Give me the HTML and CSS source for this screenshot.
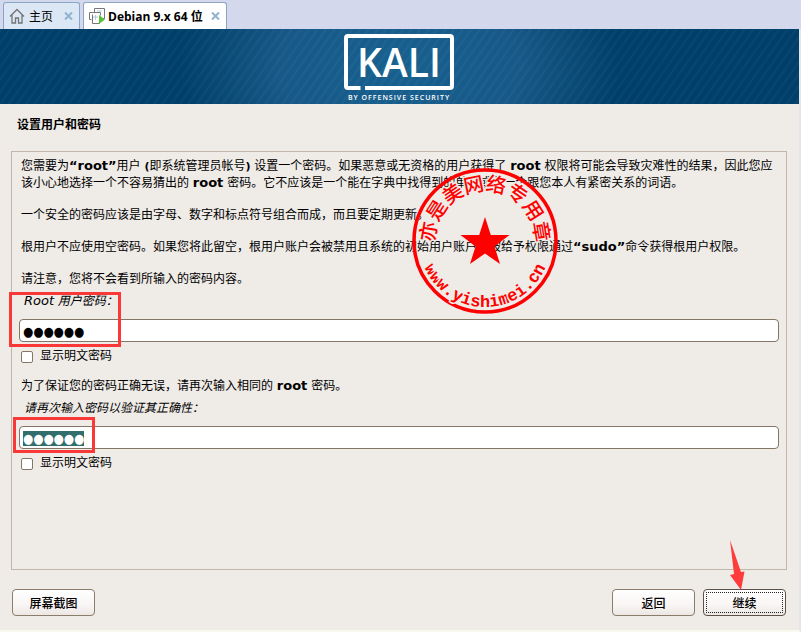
FILE: index.html
```html
<!DOCTYPE html>
<html lang="zh-CN">
<head>
<meta charset="utf-8">
<title>Debian 9.x 64 位</title>
<link rel="stylesheet" href="styles.css">
</head>
<body>
<nav class="tabs">
  <div class="tab">
    <svg class="tab-icon" width="16" height="16" viewBox="0 0 16 16" fill="none" stroke="#737373" stroke-width="1.3"><path d="M1 8.500 8 1.500l7 7M3 7v8h3.500v-5h3v5H13V7"/></svg>
    <a href="#home">主页</a>
    <button class="close" aria-label="关闭主页"><svg width="9" height="8" viewBox="0 0 9 8"><path d="M1 .5l7 7M8 .5l-7 7" stroke="#8fb3cf" stroke-width="2"/></svg></button>
  </div>
  <div class="tab active">
    <svg class="tab-icon" width="16" height="16" viewBox="0 0 16 16" fill="none" stroke="#777"><path d="M5.500 4V.5h10v10H13M5 4.500H.5v7h2M3.500 6.500V15.500h7v-2M3.500 4.500h8v3"/><path d="M6.500 7v5M4 9h5M8 3h5" stroke="#b7cbdc"/><path d="M10 7l6 4.500-6 4.500z" fill="#5bbd3c" stroke="none"/></svg>
    <a href="#debian">Debian 9.x 64 位</a>
    <button class="close" aria-label="关闭 Debian"><svg width="9" height="8" viewBox="0 0 9 8"><path d="M1 .5l7 7M8 .5l-7 7" stroke="#8fb3cf" stroke-width="2"/></svg></button>
  </div>
</nav>
<div class="installer">
  <header class="banner">
    <svg width="114" height="70" viewBox="0 0 114 70">
      <path d="M18.500 56H6a2 2 0 0 1-2-2V6a2 2 0 0 1 2-2h102a2 2 0 0 1 2 2v48a2 2 0 0 1-2 2H23" fill="none" stroke="#fff" stroke-width="4"/>
      <text class="logo-name" x="57" y="45" text-anchor="middle">KALI</text>
      <text class="logo-sub" x="57" y="68" text-anchor="middle">BY OFFENSIVE SECURITY</text>
    </svg>
  </header>
  <h1>设置用户和密码</h1>
  <main class="panel">
    <p>您需要为<strong>“root”</strong>用户 <b class="paren">(</b>即系统管理员帐号<b class="paren">)</b> 设置一个密码。如果恶意或无资格的用户获得了 <strong>root</strong> 权限将可能会导致灾难性的结果，因此您应该小心地选择一个不容易猜出的 <strong>root</strong> 密码。它不应该是一个能在字典中找得到的单词或是一个跟您本人有紧密关系的词语。</p>
    <p>一个安全的密码应该是由字母、数字和标点符号组合而成，而且要定期更新。</p>
    <p>根用户不应使用空密码。如果您将此留空，根用户账户会被禁用且系统的初始用户账户将被给予权限通过<strong>“sudo”</strong>命令获得根用户权限。</p>
    <p>请注意，您将不会看到所输入的密码内容。</p>
    <section class="field">
      <label class="caption" for="pw"><span class="latin">Root</span> 用户密码：</label>
      <input class="secret" id="pw" type="text" value="●●●●●●">
      <label class="check"><input type="checkbox">显示明文密码</label>
      <span class="mark mark-first"></span>
    </section>
    <p class="again">为了保证您的密码正确无误，请再次输入相同的 <strong>root</strong> 密码。</p>
    <section class="field">
      <label class="caption" for="pw2">请再次输入密码以验证其正确性：</label>
      <input class="secret" id="pw2" type="text" value="●●●●●●">
      <label class="check"><input type="checkbox">显示明文密码</label>
      <span class="mark mark-second"></span>
    </section>
    <svg class="stamp" width="146" height="146" viewBox="-73 -73 146 146">
      <defs>
        <path id="arc-top" d="M-50 0A50 50 0 0 1 50 0"/>
        <path id="arc-bottom" d="M-66 0A66 66 0 0 0 66 0"/>
      </defs>
      <circle r="71" fill="none" stroke="#f00" stroke-width="3.500"/>
      <path d="M0-24 5.800-6H24.500L9.500 5.500 15 23 0 12.500-15 23-9.500 5.500-24.500-6H-5.800z" fill="#f00"/>
      <text class="stamp-name" text-anchor="middle"><textPath href="#arc-top" startOffset="50%">亦是美网络专用章</textPath></text>
      <text class="stamp-url" text-anchor="middle"><textPath href="#arc-bottom" startOffset="50%">www.yishimei.cn</textPath></text>
    </svg>
  </main>
  <footer>
    <button class="btn">屏幕截图</button>
    <button class="btn push">返回</button>
    <button class="btn default">继续</button>
    <svg class="arrow" width="16" height="50" viewBox="0 0 16 50"><path d="M1 0 12 32 15.500 31.500 12 50 1 35 5 34z" fill="#ff3c3c"/></svg>
  </footer>
</div>
<script src="select.js"></script>
</body>
</html>
```
FILE: styles.css
```css
* { box-sizing: border-box; }
body {
  margin: 0;
  min-height: 100vh;
  display: flex;
  flex-direction: column;
  background: #d3d8ec;
  color: #000;
  font: 12px/17px "DejaVu Sans", "Noto Sans CJK SC", sans-serif;
}
.tabs { display: flex; gap: 3px; height: 29px; padding: 2px 3px 0; }
.tab {
  display: flex;
  align-items: center;
  padding: 0 6px 0 5px;
  background: #dbe7f4;
  border: 1px solid #8ba6c4;
  border-bottom: 0;
  border-radius: 3px 3px 0 0;
  font-family: "Open Sans", "Noto Sans CJK SC", sans-serif;
}
.tab.active { background: #fff; font-weight: 700; }
.tab a { color: inherit; text-decoration: none; margin: 0 11px 0 4px; }
.tab.active a { margin: 0 8px 0 3px; }
.close { display: flex; padding: 0; border: 0; background: none; }
.installer {
  flex: 1;
  display: flex;
  flex-direction: column;
  background: #efebe7;
  border-right: 2px solid #e4e4e9;
  border-bottom: 2px solid #f8f9ee;
}
.banner {
  display: flex;
  justify-content: center;
  height: 75px;
  padding: 3px 2px 0 0;
  background:
    repeating-linear-gradient(125deg, rgba(255,255,255,.03) 0 2px, transparent 3px 7px),
    radial-gradient(ellipse 220px 150px at center, #17618f, #175888 55%, #003f69);
}
.logo-name { font: 600 39px "Open Sans", sans-serif; fill: #fff; }
.logo-sub { font: 600 7px "Open Sans", sans-serif; letter-spacing: 1px; fill: #fff; }
h1 { margin: 13px 17px 17px; font-size: 12px; line-height: 17px; }
.panel {
  position: relative;
  flex: 1;
  margin: 0 12px 0 11px;
  padding: 6px 9px;
  border: 1px solid #c2b6a9;
}
p { margin: 0 0 15px; }
p:nth-of-type(4) { margin-bottom: 5px; }
strong, .latin { font-size: 13px; line-height: 16px; }
.paren { font-size: 11px; }
.again { margin: 13px 0 5px; }
.field { position: relative; margin: 0 -2px; }
.caption { display: block; padding-left: 5px; margin-bottom: 9px; font-style: italic; }
.secret {
  display: block;
  width: 100%;
  height: 23px;
  padding: 1px 3px 0;
  border: 1px solid #857565;
  border-radius: 4px;
  background: #fff;
  color: #000;
  font: 13px/15px "DejaVu Sans Condensed", "DejaVu Sans", sans-serif;
  outline: 0;
}
.secret::selection { background: #326e6b; color: #fff; }
.check { display: flex; align-items: center; gap: 7px; width: max-content; margin: 6px 0 0 2px; }
.check input { appearance: none; width: 12px; height: 12px; margin: 0; border: 1px solid #857565; border-radius: 2px; background: #fff; }
.mark { position: absolute; border: 3px solid #fb3838; pointer-events: none; }
.mark-first { left: -10px; top: -1px; width: 112px; height: 55px; }
.mark-second { left: -6px; top: 17px; width: 82px; height: 36px; }
.stamp { position: absolute; left: 400px; top: 16px; overflow: visible; pointer-events: none; }
.stamp-name, .stamp-url { fill: #f00; stroke: #efebe7; stroke-width: 3px; paint-order: stroke; }
.stamp-name { font: 500 20px "Noto Sans CJK SC", sans-serif; }
.stamp-url { font: 700 17px "Liberation Mono", monospace; }
footer { position: relative; display: flex; gap: 8px; padding: 19px 13px 14px 12px; }
.btn {
  width: 83px;
  height: 27px;
  padding: 0;
  border: 1px solid #8b7d6c;
  border-radius: 4px;
  background: linear-gradient(#fff, #f8f5f4 60%, #ece7e3);
  color: #000;
  font: 500 12px/17px "Noto Sans CJK SC", sans-serif;
}
.push { margin-left: auto; }
.default { border-color: #5d5048; outline: 1px dotted #222; outline-offset: -4px; }
.arrow { position: absolute; right: 54px; top: -30px; }
```
FILE: select.js
```javascript
const confirmField = document.getElementById("pw2");
confirmField.focus();
confirmField.select();
```
